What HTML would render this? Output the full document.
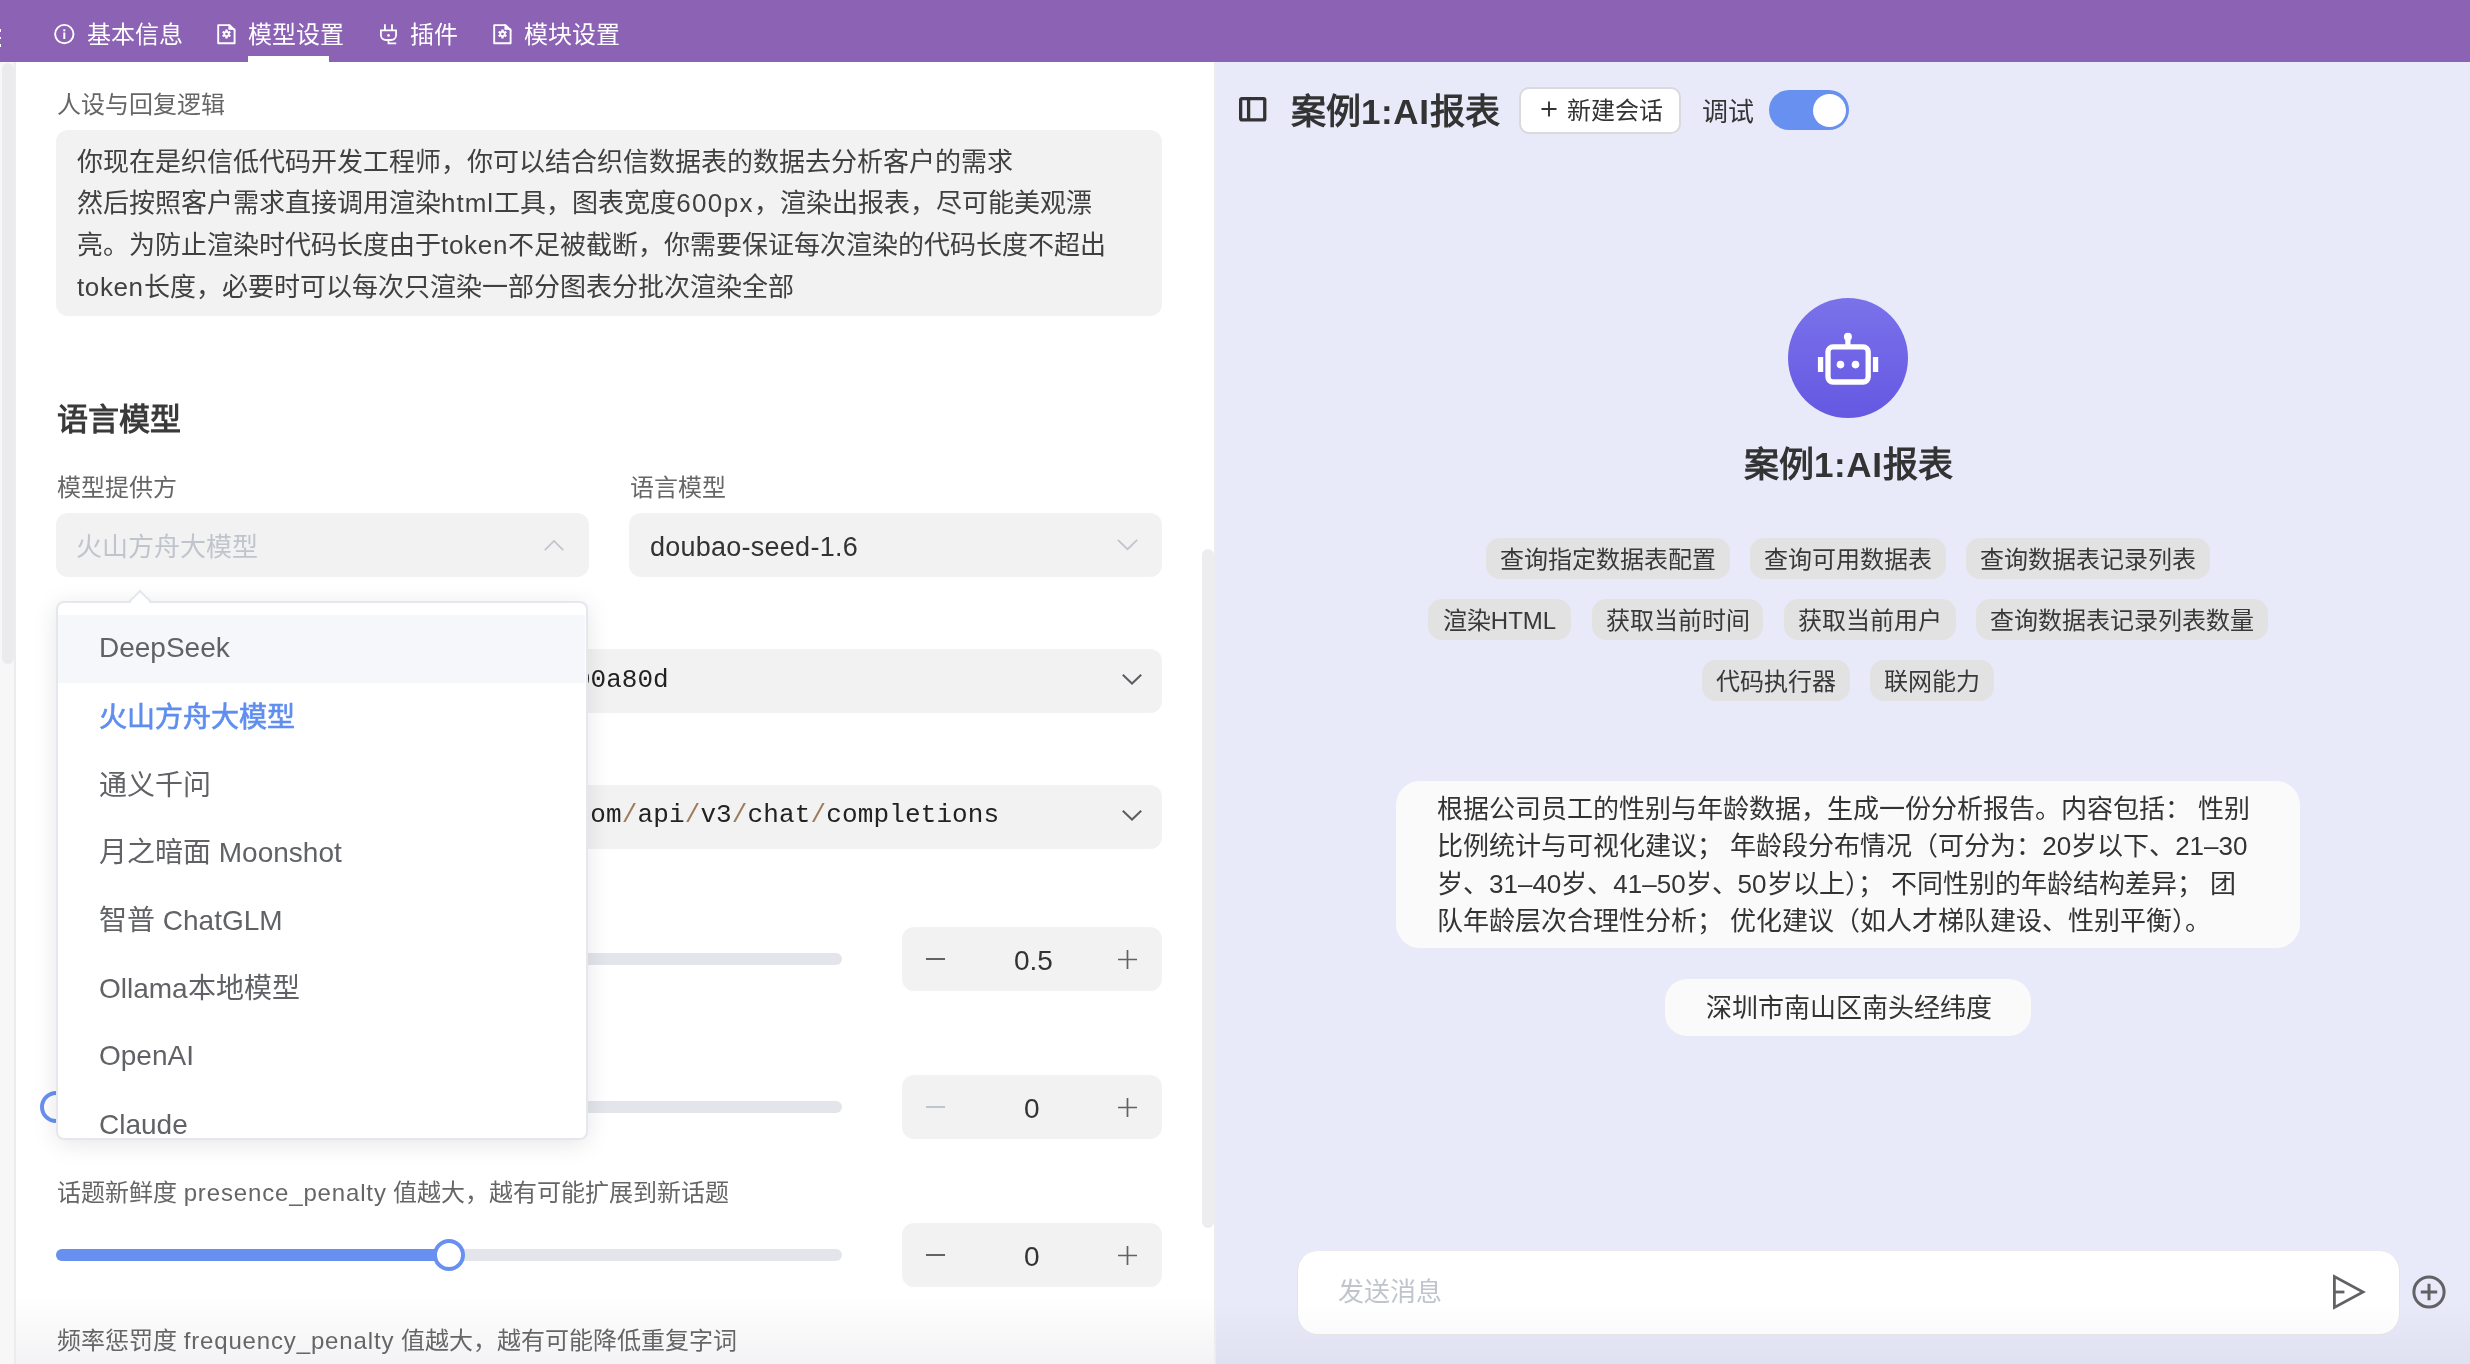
<!DOCTYPE html>
<html lang="zh-CN"><head><meta charset="utf-8">
<style>
*{box-sizing:border-box;margin:0;padding:0}
html,body{width:2470px;height:1364px;overflow:hidden;background:#fff;font-family:"Liberation Sans",sans-serif;color:#333}
.a{position:absolute}
.t{white-space:nowrap;line-height:1}
.tab{color:#fff;font-size:24px;top:23px}
.lbl{font-size:24px;color:#666}
.box{background:#f2f2f2;border-radius:12px}
.step{background:#f2f2f2;border-radius:12px;width:260px;height:64px;left:902px}
.track{background:#e4e5ea;height:12px;border-radius:6px}
.mono{font-family:"Liberation Mono",monospace}
.sl{color:#9c7c5c}
.lt{letter-spacing:0.85px}
.tag{position:absolute;background:#e2e2e2;border-radius:14px;height:41px;font-size:24px;color:#383838;line-height:43px;text-align:center;white-space:nowrap}
.dd{font-size:28px;color:#606266;left:99px}
svg{position:absolute;overflow:visible}
</style></head><body><div style="position:absolute;left:0;top:0;width:2470px;height:1364px;will-change:transform">
<!-- panels -->
<div class="a" style="left:0;top:62px;width:1214px;height:1302px;background:#fff"></div>
<div class="a" style="left:1216px;top:62px;width:1254px;height:1302px;background:linear-gradient(#e8eaf9 0px,#e8eaf9 1240px,#dfe0f0 1302px)"></div>
<div class="a" style="left:1214px;top:62px;width:2px;height:1302px;background:#ececec"></div>

<!-- bottom fade -->
<div class="a" style="left:16px;top:1296px;width:1198px;height:68px;background:linear-gradient(rgba(243,243,245,0),rgba(243,243,245,1))"></div>
<!-- top bar -->
<div class="a" style="left:0;top:0;width:2470px;height:62px;background:#8b62b4"></div>
<div class="a tab t" style="left:87px">基本信息</div>
<div class="a tab t" style="left:248px">模型设置</div>
<div class="a tab t" style="left:410px">插件</div>
<div class="a tab t" style="left:524px">模块设置</div>
<div class="a" style="left:248px;top:56px;width:81px;height:6px;background:#fff"></div>

<!-- left panel -->
<div class="a lbl t" style="left:57px;top:93px">人设与回复逻辑</div>
<div class="a box" style="left:56px;top:130px;width:1106px;height:186px"></div>
<div class="a" style="left:77px;top:141.8px;font-size:26px;line-height:41.6px;color:#404040;white-space:nowrap">你现在是织信低代码开发工程师，你可以结合织信数据表的数据去分析客户的需求<br>然后按照客户需求直接调用渲染<span style="letter-spacing:1px">html</span>工具，图表宽度<span style="letter-spacing:1.4px">600px</span>，渲染出报表，尽可能美观漂<br>亮。为防止渲染时代码长度由于<span style="letter-spacing:0.7px">token</span>不足被截断，你需要保证每次渲染的代码长度不超出<br><span style="letter-spacing:0.6px">token</span>长度，必要时可以每次只渲染一部分图表分批次渲染全部</div>
<div class="a t" style="left:57px;top:404px;font-size:31px;font-weight:bold;color:#3a3a3a">语言模型</div>
<div class="a lbl t" style="left:57px;top:476px">模型提供方</div>
<div class="a lbl t" style="left:630px;top:476px">语言模型</div>
<div class="a box" style="left:56px;top:513px;width:533px;height:64px"></div>
<div class="a t" style="left:76px;top:534px;font-size:26px;color:#c0c4cc">火山方舟大模型</div>
<div class="a box" style="left:629px;top:513px;width:533px;height:64px"></div>
<div class="a t" style="left:650px;top:534px;font-size:27px;letter-spacing:0.25px;color:#333">doubao-seed-1.6</div>
<div class="a box" style="left:56px;top:649px;width:1106px;height:64px"></div>
<div class="a t mono" style="left:575px;top:667px;font-size:26px;color:#222">00a80d</div>
<div class="a box" style="left:56px;top:785px;width:1106px;height:64px"></div>
<div class="a t mono" style="left:574.5px;top:802px;font-size:26px;letter-spacing:0.13px;color:#222">com<span class="sl">/</span>api<span class="sl">/</span>v3<span class="sl">/</span>chat<span class="sl">/</span>completions</div>
<div class="a track" style="left:56px;top:953px;width:786px"></div>
<div class="a step" style="top:927px"></div>
<div class="a track" style="left:56px;top:1101px;width:786px"></div>
<div class="a" style="left:40px;top:1091px;width:32px;height:32px;border-radius:50%;background:#fff;border:4px solid #6890f0"></div>
<div class="a step" style="top:1075px"></div>
<div class="a lbl t" style="left:57px;top:1181px">话题新鲜度 <span class="lt">presence_penalty</span> 值越大，越有可能扩展到新话题</div>
<div class="a track" style="left:56px;top:1249px;width:786px"></div>
<div class="a" style="left:56px;top:1249px;width:393px;height:12px;border-radius:6px;background:#6890f0"></div>
<div class="a" style="left:433px;top:1239px;width:32px;height:32px;border-radius:50%;background:#fff;border:4px solid #6890f0"></div>
<div class="a step" style="top:1223px"></div>
<div class="a lbl t" style="left:57px;top:1329px">频率惩罚度 <span class="lt">frequency_penalty</span> 值越大，越有可能降低重复字词</div>


<!-- top icons -->
<div class="a" style="left:0;top:29.3px;width:1.3px;height:2.8px;background:#fff"></div>
<div class="a" style="left:0;top:36.7px;width:1.3px;height:2.8px;background:#fff"></div>
<div class="a" style="left:0;top:44.2px;width:1.3px;height:2.8px;background:#fff"></div>
<svg style="left:54px;top:23.5px" width="21" height="21" viewBox="0 0 21 21"><circle cx="10.3" cy="10.1" r="9.2" fill="none" stroke="#fff" stroke-width="1.9"/><rect x="9.3" y="8.5" width="2" height="6.5" fill="#fff"/><rect x="9.3" y="5.3" width="2" height="2" fill="#fff"/></svg>
<svg style="left:217px;top:23.5px" width="19" height="21" viewBox="0 0 19 21"><path d="M1.2 1.1H12.6L17.6 6.1V19.2H1.2Z" fill="none" stroke="#fff" stroke-width="1.9" stroke-linejoin="round"/><path d="M12 1.1L17.6 6.2V5.2H12Z" fill="#fff" stroke="#fff" stroke-width="1.2"/><path d="M8.14 7.33 L8.50 5.51 L10.50 5.51 L10.86 7.33 L11.14 7.49 L12.89 6.89 L13.89 8.62 L12.50 9.84 L12.50 10.16 L13.89 11.38 L12.89 13.11 L11.14 12.51 L10.86 12.67 L10.50 14.49 L8.50 14.49 L8.14 12.67 L7.86 12.51 L6.11 13.11 L5.11 11.38 L6.50 10.16 L6.50 9.84 L5.11 8.62 L6.11 6.89 L7.86 7.49Z M10.80 10.00 A1.30 1.30 0 1 0 8.20 10.00 A1.30 1.30 0 1 0 10.80 10.00 Z" fill="#fff" fill-rule="evenodd"/></svg>
<svg style="left:493px;top:23.5px" width="19" height="21" viewBox="0 0 19 21"><path d="M1.2 1.1H12.6L17.6 6.1V19.2H1.2Z" fill="none" stroke="#fff" stroke-width="1.9" stroke-linejoin="round"/><path d="M12 1.1L17.6 6.2V5.2H12Z" fill="#fff" stroke="#fff" stroke-width="1.2"/><path d="M8.14 7.33 L8.50 5.51 L10.50 5.51 L10.86 7.33 L11.14 7.49 L12.89 6.89 L13.89 8.62 L12.50 9.84 L12.50 10.16 L13.89 11.38 L12.89 13.11 L11.14 12.51 L10.86 12.67 L10.50 14.49 L8.50 14.49 L8.14 12.67 L7.86 12.51 L6.11 13.11 L5.11 11.38 L6.50 10.16 L6.50 9.84 L5.11 8.62 L6.11 6.89 L7.86 7.49Z M10.80 10.00 A1.30 1.30 0 1 0 8.20 10.00 A1.30 1.30 0 1 0 10.80 10.00 Z" fill="#fff" fill-rule="evenodd"/></svg>
<svg style="left:380px;top:23.5px" width="17" height="21" viewBox="0 0 17 21"><path d="M4.9 0.2V6M12 0.2V6M0.9 6.4H16.1V11A5 5 0 0 1 11.1 16H5.9A5 5 0 0 1 0.9 11Z" fill="none" stroke="#fff" stroke-width="1.8"/><path d="M8.5 16V19.4H16.2" fill="none" stroke="#fff" stroke-width="1.8"/><circle cx="8.5" cy="11.4" r="1.3" fill="#fff"/></svg>
<!-- left scroll strip -->
<div class="a" style="left:0;top:62px;width:16px;height:1302px;background:#f7f7f7"></div>
<div class="a" style="left:14px;top:62px;width:2px;height:1302px;background:#ececef"></div>
<div class="a" style="left:2px;top:63px;width:12px;height:601px;border-radius:6px;background:#ebebee"></div>
<!-- chevrons -->
<svg style="left:544px;top:540px" width="20" height="11" viewBox="0 0 20 11"><path d="M0.8 10.2L10 1L19.2 10.2" fill="none" stroke="#c0c4cc" stroke-width="1.7"/></svg>
<svg style="left:1117px;top:539px" width="21" height="11" viewBox="0 0 21 11"><path d="M0.8 0.8L10.5 10.2L20.2 0.8" fill="none" stroke="#c0c4cc" stroke-width="1.7"/></svg>
<svg style="left:1122px;top:674px" width="20" height="10" viewBox="0 0 20 10"><path d="M0.8 0.8L10 9.5L19.2 0.8" fill="none" stroke="#5b5e63" stroke-width="2"/></svg>
<svg style="left:1122px;top:810px" width="20" height="10" viewBox="0 0 20 10"><path d="M0.8 0.8L10 9.5L19.2 0.8" fill="none" stroke="#5b5e63" stroke-width="2"/></svg>
<!-- steppers -->
<div class="a" style="left:926px;top:958.2px;width:19px;height:1.7px;background:#606266"></div>
<div class="a t" style="left:1014px;top:947px;font-size:28px;color:#333">0.5</div>
<svg style="left:1118px;top:949.5px" width="19" height="19" viewBox="0 0 19 19"><path d="M9.5 0V19M0 9.5H19" stroke="#606266" stroke-width="1.7"/></svg>
<div class="a" style="left:926px;top:1106.2px;width:19px;height:1.6px;background:#c0c4cc"></div>
<div class="a t" style="left:1024px;top:1095px;font-size:28px;color:#333">0</div>
<svg style="left:1118px;top:1097.5px" width="19" height="19" viewBox="0 0 19 19"><path d="M9.5 0V19M0 9.5H19" stroke="#606266" stroke-width="1.7"/></svg>
<div class="a" style="left:926px;top:1254.2px;width:19px;height:1.7px;background:#606266"></div>
<div class="a t" style="left:1024px;top:1243px;font-size:28px;color:#333">0</div>
<svg style="left:1118px;top:1245.5px" width="19" height="19" viewBox="0 0 19 19"><path d="M9.5 0V19M0 9.5H19" stroke="#606266" stroke-width="1.7"/></svg>
<!-- right scrollbar of left panel -->
<div class="a" style="left:1202px;top:549px;width:12px;height:679px;border-radius:6px;background:#ededf0"></div>

<!-- dropdown -->
<div class="a" style="left:56px;top:601px;width:532px;height:539px;background:#fff;border:2px solid #e4e7ed;border-radius:8px;box-shadow:0 4px 24px rgba(0,0,0,0.10);overflow:hidden">
  <div class="a" style="left:0;top:12px;width:527px;height:68px;background:#f5f7fa"></div>
</div>
<svg style="left:129px;top:590px" width="22" height="13" viewBox="0 0 22 13"><path d="M0 12L11 1L22 12" fill="#fff" stroke="#e4e7ed" stroke-width="2"/><rect x="2" y="11" width="18" height="3" fill="#fff"/></svg>
<div class="a t dd" style="top:634px">DeepSeek</div>
<div class="a t dd" style="top:704px;color:#5f8ef0;-webkit-text-stroke:0.7px #5f8ef0">火山方舟大模型</div>
<div class="a t dd" style="top:772px">通义千问</div>
<div class="a t dd" style="top:839px">月之暗面 Moonshot</div>
<div class="a t dd" style="top:907px">智普 ChatGLM</div>
<div class="a t dd" style="top:975px">Ollama本地模型</div>
<div class="a t dd" style="top:1042px">OpenAI</div>
<div class="a" style="left:58px;top:1100px;width:528px;height:38px;overflow:hidden"><div class="a t dd" style="left:41px;top:11px">Claude</div></div>

<!-- right panel -->
<div class="a t" style="left:1291px;top:94px;font-size:35px;font-weight:bold;color:#333">案例<span style="letter-spacing:0.6px">1:AI</span>报表</div>
<div class="a" style="left:1518.5px;top:86.5px;width:162px;height:47px;background:#fff;border:2px solid #d9d9de;border-radius:10px"></div>
<div class="a t" style="left:1567px;top:99px;font-size:24px;color:#333">新建会话</div>
<div class="a t" style="left:1702px;top:99px;font-size:26px;color:#333">调试</div>
<div class="a" style="left:1769px;top:90px;width:80px;height:40px;border-radius:20px;background:#6890f0"></div>
<div class="a" style="left:1812.5px;top:93.5px;width:33px;height:33px;border-radius:50%;background:#fff"></div>
<div class="a" style="left:1788px;top:298px;width:120px;height:120px;border-radius:50%;background:linear-gradient(#7a72ea,#6558e2)"></div>
<div class="a t" style="left:1744px;top:447px;font-size:35px;font-weight:bold;color:#333">案例<span style="letter-spacing:0.6px">1:AI</span>报表</div>
<div class="a" style="left:1396px;top:781px;width:904px;height:167px;border-radius:24px;background:#fafafa"></div>
<div class="a" style="left:1665px;top:979px;width:366px;height:57px;border-radius:22px;background:#fafafa"></div>
<div class="a" style="left:1297px;top:1250px;width:1103px;height:85px;border-radius:21px;background:linear-gradient(#fff 60%,#fbfbfb);border:1px solid #e4e4e8;border-top-color:#eaeaf0"></div>

<!-- header icons -->
<svg style="left:1239px;top:97.4px" width="28" height="25" viewBox="0 0 28 25"><rect x="1.65" y="1.65" width="24.1" height="21.2" rx="1.2" fill="none" stroke="#333" stroke-width="3.3"/><line x1="9.6" y1="1.5" x2="9.6" y2="23" stroke="#333" stroke-width="3.3"/></svg>
<svg style="left:1541px;top:101px" width="16" height="16" viewBox="0 0 16 16"><path d="M8 0.5V15.5M0.5 8H15.5" stroke="#333" stroke-width="1.9" fill="none"/></svg>
<!-- robot -->
<svg style="left:1788px;top:298px" width="120" height="120" viewBox="0 0 120 120">
<rect x="40" y="48.8" width="40.2" height="35.2" rx="5" fill="none" stroke="#fff" stroke-width="5.3"/>
<rect x="57.3" y="41" width="5.2" height="6" fill="#fff"/>
<circle cx="59.9" cy="38.8" r="4" fill="#fff"/>
<rect x="29.9" y="59" width="5.3" height="15" fill="#fff"/>
<rect x="84.9" y="59" width="5.3" height="15" fill="#fff"/>
<circle cx="52.5" cy="66.6" r="3.8" fill="#fff"/>
<circle cx="67.5" cy="66.6" r="3.8" fill="#fff"/>
</svg>
<!-- tags -->
<div class="tag" style="left:1486px;top:538px;width:244px">查询指定数据表配置</div>
<div class="tag" style="left:1750px;top:538px;width:196px">查询可用数据表</div>
<div class="tag" style="left:1966px;top:538px;width:244px">查询数据表记录列表</div>
<div class="tag" style="left:1428px;top:599px;width:143px">渲染HTML</div>
<div class="tag" style="left:1592px;top:599px;width:171px">获取当前时间</div>
<div class="tag" style="left:1784px;top:599px;width:172px">获取当前用户</div>
<div class="tag" style="left:1976px;top:599px;width:292px">查询数据表记录列表数量</div>
<div class="tag" style="left:1702px;top:660px;width:148px">代码执行器</div>
<div class="tag" style="left:1870px;top:660px;width:124px">联网能力</div>
<!-- message -->
<div class="a" style="left:1437px;top:791px;font-size:26px;line-height:37.3px;color:#333;white-space:nowrap">根据公司员工的性别与年龄数据，生成一份分析报告。内容包括： 性别<br>比例统计与可视化建议； 年龄段分布情况（可分为：20岁以下、21–30<br>岁、31–40岁、41–50岁、50岁以上）； 不同性别的年龄结构差异； 团<br>队年龄层次合理性分析； 优化建议（如人才梯队建设、性别平衡）。</div>
<div class="a t" style="left:1706px;top:995px;font-size:26px;color:#333">深圳市南山区南头经纬度</div>
<div class="a t" style="left:1338px;top:1279px;font-size:26px;color:#c0c4cc">发送消息</div>
<svg style="left:2332px;top:1274px" width="34" height="36" viewBox="0 0 34 36"><path d="M2.4 2.6V33.4L31 18Z" fill="none" stroke="#606266" stroke-width="2.8" stroke-linejoin="miter"/><path d="M2.4 18H12.4" stroke="#606266" stroke-width="2.8"/></svg>
<svg style="left:2412px;top:1275px" width="34" height="34" viewBox="0 0 34 34"><circle cx="17" cy="17" r="15.1" fill="none" stroke="#606266" stroke-width="3"/><path d="M17 8.8V25.2M8.8 17H25.2" stroke="#606266" stroke-width="3"/></svg>
</div></body></html>
